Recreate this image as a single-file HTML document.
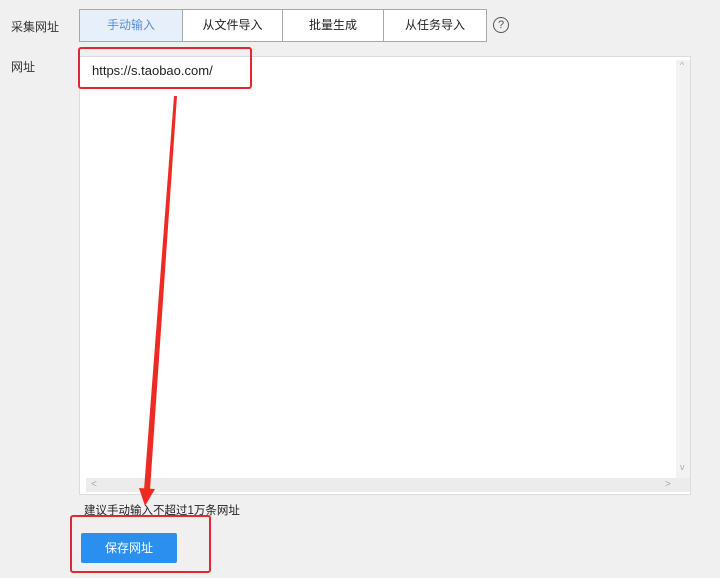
<!DOCTYPE html>
<html><head><meta charset="utf-8"><style>
body{margin:0;width:720px;height:578px;background:#f0f0f0;font-family:"Liberation Sans","Noto Sans CJK SC",sans-serif;font-size:12px;color:#333;position:relative;overflow:hidden}
.a{position:absolute}
.tab{position:absolute;top:9px;height:33px;line-height:31px;text-align:center;background:#fff;border:1px solid #a8a8a8;box-sizing:border-box;font-size:12px;color:#222}
</style></head><body>
<div class="a" style="left:11px;top:18px">采集网址</div>
<div class="tab" style="left:79px;width:104px;background:#e6effa;color:#5a8fd0">手动输入</div>
<div class="tab" style="left:183px;width:100px;border-left:none">从文件导入</div>
<div class="tab" style="left:283px;width:101px;border-left:none">批量生成</div>
<div class="tab" style="left:384px;width:103px;border-left:none">从任务导入</div>
<div class="a" style="left:493px;top:17px;width:14px;height:14px;border:1px solid #555;border-radius:50%;text-align:center;line-height:14px;font-size:11px;color:#555">?</div>
<div class="a" style="left:11px;top:58px">网址</div>
<div class="a" style="left:79px;top:56px;width:612px;height:439px;background:#fff;border:1px solid #dcdcdc;box-sizing:border-box"></div>
<div class="a" style="left:676px;top:60px;width:14px;height:418px;background:#f2f2f2"></div>
<div class="a" style="left:86px;top:478px;width:604px;height:14px;background:#ececec"></div>
<div class="a" style="left:680px;top:60px;font-size:9px;color:#aaa">^</div>
<div class="a" style="left:680px;top:462px;font-size:9px;color:#aaa">v</div>
<div class="a" style="left:91px;top:479px;font-size:10px;color:#aaa">&lt;</div>
<div class="a" style="left:665px;top:479px;font-size:10px;color:#aaa">&gt;</div>
<div class="a" style="left:92px;top:63px;font-size:13px;color:#222">https://s.taobao.com/</div>
<div class="a" style="left:78px;top:47px;width:174px;height:42px;border:2px solid #e0282d;border-radius:3px;box-sizing:border-box"></div>
<div class="a" style="left:84px;top:502px;color:#222;font-size:11.5px">建议手动输入不超过1万条网址</div>
<div class="a" style="left:81px;top:533px;width:96px;height:30px;background:#2b8ff0;border-radius:2px;color:#fff;text-align:center;line-height:30px">保存网址</div>
<div class="a" style="left:70px;top:515px;width:141px;height:58px;border:2px solid #e0282d;border-radius:3px;box-sizing:border-box"></div>
<svg class="a" style="left:0;top:0" width="720" height="578"><polygon points="174,96 177,96 150,490 144,490" fill="#ee2a24"/><polygon points="139,488 155,489 145,506" fill="#ee2a24"/></svg>
</body></html>
